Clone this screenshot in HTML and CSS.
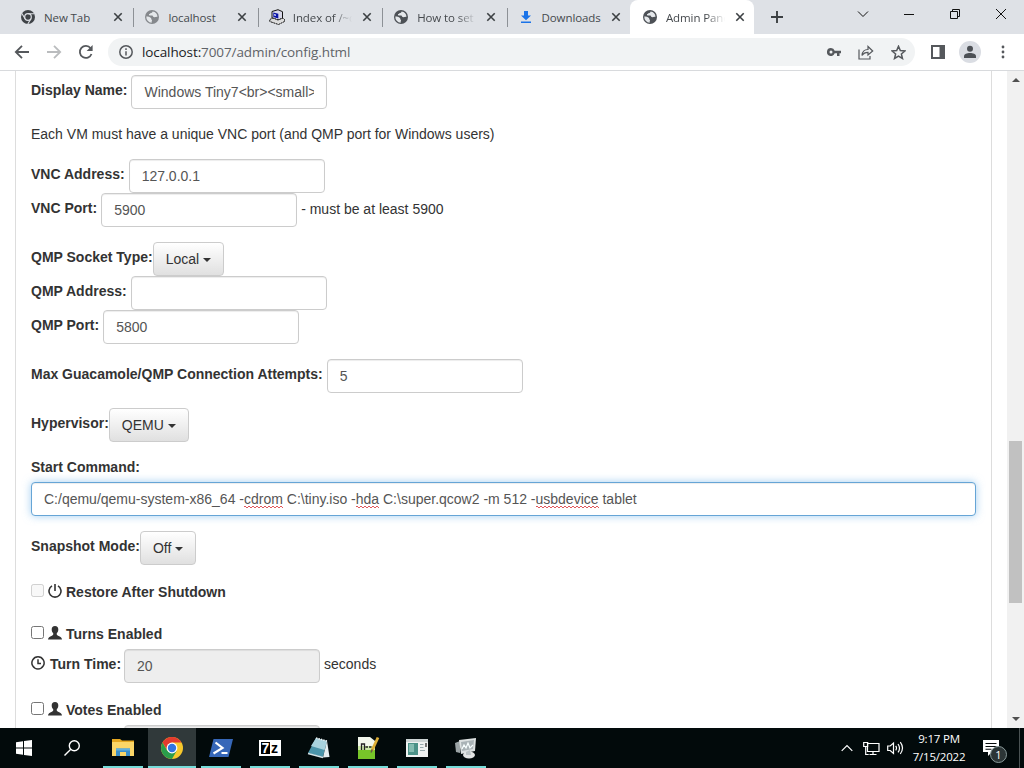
FILE: index.html
```html
<!DOCTYPE html>
<html lang="en">
<head>
    <meta charset="UTF-8">
    <meta name="viewport" content="width=device-width, initial-scale=1.0">
    <title>Admin Panel</title>
    <link rel="stylesheet" href="styles.css">
</head>
<body>
    <!-- shared icons -->
    <svg class="defs" width="0" height="0">
        <symbol id="close" viewBox="0 0 10 10"><path d="M1.3 1.3l7.4 7.4M8.7 1.3L1.3 8.7" stroke="#3c4043" stroke-width="1.6" fill="none"/></symbol>
        <symbol id="globe" viewBox="0 0 14 14">
            <circle cx="7" cy="7" r="7" fill="currentColor"/>
            <path d="M7.6 1.4c-.3 1-.9 1.500-2 1.700-.3.900-.8 1-1.600 1-.1 1 .2 1.500 1.300 1.500h2c.7.200.6 1.300 1.400 1.500 1.200.2 2.200-.5 3.800-.4A5.700 5.700 0 0 0 7.600 1.400zM1.300 6.600c1.700.1 3.600.2 4.600 1.300.8.800 0 1.400.9 1.900.7.600-.3 1.300-.1 2.900A5.700 5.700 0 0 1 1.300 6.600z" fill="#e4e7ea"/>
        </symbol>
        <symbol id="user" viewBox="0 0 14 14"><path d="M7 0C4.700 0 3.700 1.500 3.700 3.500c0 1.700.7 2.800 1.500 3.700.3 1.300-.1 1.900-1.300 2.500C1.500 10.700.2 11.200 0 13.500h14c-.2-2.300-1.500-2.800-3.900-3.800-1.200-.6-1.600-1.200-1.300-2.500.8-.9 1.500-2 1.500-3.700C10.300 1.500 9.300 0 7 0z" fill="#333"/></symbol>
    </svg>

    <div class="tab-strip">
        <div class="tab">
            <svg class="favicon" viewBox="0 0 14 14"><circle cx="7" cy="7" r="7" fill="#3f4347"/><circle cx="7" cy="7" r="3.300" fill="#3f4347" stroke="#dee1e6" stroke-width="1.200"/><path d="M7 3.700h6.400M4.100 8.700L.9 3.500M9.900 8.700L6.800 14" stroke="#dee1e6" stroke-width="1.100"/></svg>
            <span class="tab-title">New Tab</span>
            <svg class="tab-close"><use href="#close"/></svg>
        </div>
        <div class="tab">
            <svg class="favicon light"><use href="#globe"/></svg>
            <span class="tab-title">localhost</span>
            <svg class="tab-close"><use href="#close"/></svg>
        </div>
        <div class="tab">
            <svg class="favicon wide" viewBox="0 0 16 16"><path d="M3 2.500L9 .7l4.500 2v6.800L9 11 3 9z" fill="#d8d8e8" stroke="#111" stroke-width="1"/><path d="M4.300 3.600l5 1.200v4.700l-5-1.500z" fill="#0a14a8"/><path d="M5.200 5l1.600.4V7l-1.600-.4z" fill="#fff"/><path d="M.8 10.500L4 9l5 2 5-2 1.500 1.500v2L9.500 15.500.8 12.500z" fill="#ddd" stroke="#111" stroke-width="1" stroke-dasharray="2 .6"/></svg>
            <span class="tab-title fade">Index of /~c</span>
            <svg class="tab-close"><use href="#close"/></svg>
        </div>
        <div class="tab">
            <svg class="favicon"><use href="#globe"/></svg>
            <span class="tab-title fade">How to set u</span>
            <svg class="tab-close"><use href="#close"/></svg>
        </div>
        <div class="tab">
            <svg class="favicon" viewBox="0 0 14 14"><path d="M5 1h4v4.500h3L7 10.300 2 5.500h3zM2 11.500h10V13H2z" fill="#1a73e8"/></svg>
            <span class="tab-title">Downloads</span>
            <svg class="tab-close"><use href="#close"/></svg>
        </div>
        <div class="tab active">
            <svg class="favicon"><use href="#globe"/></svg>
            <span class="tab-title fade">Admin Panel</span>
            <svg class="tab-close"><use href="#close"/></svg>
        </div>
        <svg class="new-tab" viewBox="0 0 12 12"><path d="M6 0v12M0 6h12" stroke="#3c4043" stroke-width="1.900"/></svg>
        <div class="window-buttons">
            <svg viewBox="0 0 12 12"><path d="M1 3.500l5 5 5-5"/></svg>
            <svg viewBox="0 0 12 12"><path d="M1 6.500h10"/></svg>
            <svg viewBox="0 0 12 12"><path d="M1.500 3.500h7v7h-7zM3.500 3.500v-2h7v7h-2"/></svg>
            <svg viewBox="0 0 12 12"><path d="M1 1l10 10M11 1L1 11"/></svg>
        </div>
    </div>

    <div class="toolbar">
        <svg class="nav" viewBox="0 0 16 16"><path d="M15 8H2M8 1.800L1.800 8 8 14.200"/></svg>
        <svg class="nav disabled" viewBox="0 0 16 16"><path d="M1 8h13M8 1.800L14.200 8 8 14.200"/></svg>
        <svg class="nav" viewBox="0 0 16 16"><path d="M13.500 10A6 6 0 1 1 12.600 4.200"/><path d="M14.600 1v6H8.600z" fill="#55585c" stroke="none"/></svg>
        <div class="address-bar">
            <svg class="info" viewBox="0 0 14 14"><circle cx="7" cy="7" r="6.200"/><path d="M7 6.200v4.300M7 3.300v1.600"/></svg>
            <span class="url"><b>localhost:</b>7007/admin/config.html</span>
            <svg class="key" viewBox="0 0 14 8"><path d="M4 0a4 4 0 1 0 3.700 5.300H10V8h2.500V5.300H14V2.700H7.700A4 4 0 0 0 4 0zm0 2.500a1.500 1.500 0 1 1 0 3 1.500 1.500 0 0 1 0-3z" fill="#55585c" fill-rule="evenodd"/></svg>
            <svg class="share" viewBox="0 0 16 15"><path d="M1 4.500v9.500h11v-3M4 10.500c.3-4 2.500-6 6-6V1.500l4.700 4.500L10 10V7.300C7.500 7.300 5.500 8 4 10.500z"/></svg>
            <svg class="star" viewBox="0 0 14 14"><path d="M7 1.200l1.700 4 4.300.4-3.300 2.800 1 4.200L7 10.300l-3.700 2.300 1-4.200L1 5.600l4.300-.4z"/></svg>
        </div>
        <svg class="panel" viewBox="0 0 14 14"><path d="M1 1h12v12H1zM9.500 1v12M11.500 1v12" fill="none" stroke="#55585c" stroke-width="2"/></svg>
        <span class="avatar"><svg viewBox="0 0 14 14"><circle cx="7" cy="3.800" r="3" fill="#4d5156"/><path d="M1 13v-1.800c0-2.300 3-3.200 6-3.200s6 .9 6 3.200V13z" fill="#4d5156"/></svg></span>
        <svg class="menu" viewBox="0 0 4 14"><circle cx="2" cy="2" r="1.400"/><circle cx="2" cy="7" r="1.400"/><circle cx="2" cy="12" r="1.400"/></svg>
    </div>

    <div class="page">
        <div class="card">
            <div class="row">
                <label>Display Name:</label>
                <input class="form-control" type="text" value="Windows Tiny7&lt;br&gt;&lt;small&gt;">
            </div>
            <p class="hint">Each VM must have a unique VNC port (and QMP port for Windows users)</p>
            <div class="row">
                <label>VNC Address:</label>
                <input class="form-control" type="text" value="127.0.0.1">
            </div>
            <div class="row last">
                <label>VNC Port:</label>
                <input class="form-control" type="text" value="5900">
                <span class="after">- must be at least 5900</span>
            </div>
            <div class="row tight">
                <label>QMP Socket Type:</label>
                <button class="btn">Local <span class="caret"></span></button>
            </div>
            <div class="row">
                <label>QMP Address:</label>
                <input class="form-control" type="text" value="">
            </div>
            <div class="row last">
                <label>QMP Port:</label>
                <input class="form-control" type="text" value="5800">
            </div>
            <div class="row last">
                <label>Max Guacamole/QMP Connection Attempts:</label>
                <input class="form-control" type="text" value="5">
            </div>
            <div class="row tight last">
                <label>Hypervisor:</label>
                <button class="btn">QEMU <span class="caret"></span></button>
            </div>
            <label class="block-label">Start Command:</label>
            <div class="form-control command focused">C:/qemu/qemu-system-x86_64 -<u>cdrom</u> C:\tiny.iso -<u>hda</u> C:\super.qcow2 -m 512 -<u>usbdevice</u> tablet</div>
            <div class="row tight last">
                <label>Snapshot Mode:</label>
                <button class="btn">Off <span class="caret"></span></button>
            </div>
            <div class="check restore">
                <input type="checkbox" disabled>
                <svg class="glyph" viewBox="0 0 14 14"><path d="M4 1.900a6 6 0 1 0 6 0M7 0v7" fill="none" stroke="#333" stroke-width="1.600"/></svg>
                <label>Restore After Shutdown</label>
            </div>
            <div class="check">
                <input type="checkbox">
                <svg class="glyph"><use href="#user"/></svg>
                <label>Turns Enabled</label>
            </div>
            <div class="row last">
                <svg class="glyph clock" viewBox="0 0 14 14"><path d="M7 .8a6.100 6.100 0 1 0 .01 0zM7 3.200V7.600H10" fill="none" stroke="#333" stroke-width="1.500"/></svg>
                <label class="turn-label">Turn Time:</label>
                <input class="form-control" type="text" value="20" disabled>
                <span class="after seconds">seconds</span>
            </div>
            <div class="check">
                <input type="checkbox">
                <svg class="glyph"><use href="#user"/></svg>
                <label>Votes Enabled</label>
            </div>
            <div class="row vote-time">
                <input class="form-control" type="text" value="" disabled>
            </div>
        </div>
        <div class="scrollbar">
            <span class="arrow up"></span>
            <span class="thumb"></span>
            <span class="arrow down"></span>
        </div>
    </div>

    <div class="taskbar">
        <div class="task start"><svg width="16" height="16" viewBox="0 0 16 16"><path d="M0 2.200l7-1v6.300H0zM8 1l8-1v7.500H8zM0 8.500h7v6.300l-7-1zM8 8.500h8V16l-8-1z" fill="#fff"/></svg></div>
        <div class="task search"><svg width="16" height="16" viewBox="0 0 16 16"><circle cx="10.300" cy="5.700" r="5" fill="none" stroke="#fff" stroke-width="1.400"/><path d="M6.800 9.200L.5 15.500" stroke="#fff" stroke-width="1.400"/></svg></div>
        <div class="task open"><svg width="22" height="20" viewBox="0 0 22 20"><path d="M0 1h8l2 1.500h12V18H0z" fill="#e5a821"/><path d="M0 4h22v14H0z" fill="#fbd667"/><path d="M4 10.500h14V18h-4v-4H8v4H4z" fill="#3b8fc9"/><path d="M4 10.500h14v2H4z" fill="#62b1de"/></svg></div>
        <div class="task open current"><svg width="22" height="22" viewBox="0 0 22 22"><circle cx="11" cy="11" r="11" fill="#f7c82c"/><path d="M1.500 5.500a11 11 0 0 1 19 0H11L6.500 13.500z" fill="#e33b2e"/><path d="M1.500 5.500A11 11 0 0 0 11 22l4.700-8.200H6.300z" fill="#2a9d4b"/><circle cx="11" cy="11" r="5.400" fill="#fff"/><circle cx="11" cy="11" r="4.200" fill="#3274e0"/></svg></div>
        <div class="task open"><svg width="24" height="18" viewBox="0 0 24 18"><path d="M4.500 0H24l-4.500 18H0z" fill="#3667b8"/><path d="M6.500 3.500l7 5.500-9 5.500M12.500 14h6" fill="none" stroke="#fff" stroke-width="2.200"/></svg></div>
        <div class="task open"><span class="seven-zip"><b>7</b><i>z</i></span></div>
        <div class="task open"><svg width="24" height="22" viewBox="0 0 24 22"><path d="M9 1l11 3-4 16-15-4z" fill="#4c95aa"/><path d="M9 1l11 3-2.500 9L4 9z" fill="#a9d3de"/><path d="M20 4l2.500 16-6.500.5z" fill="#e6eef0"/><path d="M1 16.500l15 4" stroke="#d5e4e8" stroke-width="1.500"/><path d="M9 1l11 3" stroke="#f3f3f3" stroke-width="1.500" stroke-dasharray="1.500 1"/></svg></div>
        <div class="task open"><svg width="24" height="24" viewBox="0 0 24 24"><path d="M2 1h12l5 4v18H2z" fill="#f2f7ec"/><path d="M2 13h17v10H2z" fill="#77c529"/><path d="M2 10h17v4H2z" fill="#cbe9a6"/><path d="M5.500 14V8h3v6M9.500 11h2.500M13 11h2.500" fill="none" stroke="#222" stroke-width="1.300"/><path d="M22 1.500l-6 13" stroke="#ddae35" stroke-width="2.800"/><path d="M16.300 13.500l-1.300 3" stroke="#654" stroke-width="1.500"/></svg></div>
        <div class="task open"><svg width="22" height="18" viewBox="0 0 22 18"><path d="M0 0h22v18H0z" fill="#f0f3f2"/><path d="M0 0h22v3H0z" fill="#cdd5d5"/><path d="M2 4h10v12H2z" fill="#4c9288"/><path d="M3 5h5v8H3z" fill="#84bcb1"/><path d="M14 5.500h3.500M14 8.500h3.500M14 11.500h5" stroke="#9aacaf"/><path d="M20 4v4" stroke="#333" stroke-width="1.300"/></svg></div>
        <div class="task open"><svg width="24" height="22" viewBox="0 0 24 22"><path d="M1 6l5-2v12l-4-1z" fill="#9ba4a6"/><path d="M5 3l17-2-1 13-14 3z" fill="#dce1e1"/><path d="M7 5l13-2-1 9-11 2z" fill="#a9b3b6"/><path d="M8 12l2-4 2 3 2-5 2 5 3-3" fill="none" stroke="#f8ffff" stroke-width="1.200"/><ellipse cx="15" cy="18" rx="6" ry="3.500" fill="#e4e6e6"/><path d="M12 15l4-2 1 5h-5z" fill="#bcc4c6"/></svg></div>
        <div class="tray">
            <svg class="chevron" viewBox="0 0 12 8"><path d="M.7 6.800L6 1.500l5.300 5.300"/></svg>
            <svg class="network" viewBox="0 0 17 15"><path d="M4.500 2.500H16v8H4.500zM10 10.500v3M6.500 13.500h7M.7 1.500h4v4h-4zM2.700 5.500v8h3"/></svg>
            <svg class="sound" viewBox="0 0 17 14"><path d="M.7 5h2.500L6.500 2v10.500L3.200 9.500H.7zM8.700 4.800q1.600 2.300 0 4.600M11 3q3 4.200 0 8.400M13.300 1.200q4.400 5.900 0 11.800"/></svg>
            <div class="clock-text"><span>9:17 PM</span><span>7/15/2022</span></div>
            <div class="notify">
                <svg width="16" height="16" viewBox="0 0 16 16"><path d="M0 0h16v12H9l-4 4v-4H0z" fill="#fff"/><path d="M2.500 3.500h11M2.500 6.500h11M2.500 9.300h6" stroke="#070b0c" stroke-width="1.100"/></svg>
                <span class="badge">1</span>
            </div>
            <span class="show-desktop"></span>
        </div>
    </div>
</body>
</html>
```
FILE: styles.css
```css
* {
    box-sizing: border-box;
}
body {
    margin: 0;
    width: 1024px;
    height: 768px;
    overflow: hidden;
    display: flex;
    flex-direction: column;
    background: #fff;
    font-family: "Liberation Sans", Arial, sans-serif;
    font-size: 14px;
    color: #333;
}
svg {
    flex: none;
}
.defs {
    position: absolute;
}

/* tabs */
.tab-strip {
    height: 34px;
    flex: none;
    display: flex;
    align-items: center;
    padding-left: 8px;
    background: #dee1e6;
    font-family: "Open Sans", "Noto Sans", sans-serif;
    font-size: 11.5px;
}
.tab {
    width: 124.4px;
    height: 34px;
    flex: none;
    display: flex;
    align-items: center;
    padding-left: 13px;
}
.tab + .tab {
    background: linear-gradient(#8d9196, #8d9196) left 1px top 8px / 1px 19px no-repeat;
}
.tab + .tab.active {
    background: #fff;
    border-radius: 8px 8px 0 0;
}
.favicon {
    width: 14px;
    height: 14px;
    color: #4d5156;
}
.favicon.light {
    color: #85888c;
}
.favicon.wide {
    width: 16px;
    height: 16px;
    margin: 0 -1px;
}
.tab-title {
    width: 59px;
    margin-left: 9px;
    overflow: hidden;
    white-space: nowrap;
    letter-spacing: -.1px;
    color: #45494d;
}
.tab-title.fade {
    -webkit-mask-image: linear-gradient(90deg, #000 68%, transparent 100%);
    mask-image: linear-gradient(90deg, #000 68%, transparent 100%);
}
.tab-close {
    width: 10px;
    height: 10px;
    margin-left: 10px;
}
.new-tab {
    width: 12px;
    height: 12px;
    margin-left: 17px;
}
.window-buttons {
    display: flex;
    gap: 34px;
    margin-left: auto;
    padding: 0 17px 6px 0;
}
.window-buttons svg {
    width: 12px;
    height: 12px;
    fill: none;
    stroke: #111;
    stroke-width: 1;
}

/* toolbar */
.toolbar {
    height: 37px;
    flex: none;
    display: flex;
    align-items: center;
    padding-left: 14px;
    border-bottom: 1px solid #d8dadd;
}
.nav {
    width: 16px;
    height: 16px;
    margin-right: 16px;
    fill: none;
    stroke: #55585c;
    stroke-width: 1.8;
}
.nav.disabled {
    stroke: #babcbe;
}
.address-bar {
    width: 807px;
    height: 28px;
    display: flex;
    align-items: center;
    margin-left: -2px;
    padding: 0 9px 0 11px;
    border-radius: 14px;
    background: #f1f3f4;
}
.info {
    width: 14px;
    height: 14px;
    fill: none;
    stroke: #55585c;
    stroke-width: 1.5;
}
.url {
    flex: 1;
    margin-left: 9px;
    font: 13.5px "Open Sans", "Noto Sans", sans-serif;
    letter-spacing: -.1px;
    color: #5f6368;
}
.url b {
    font-weight: normal;
    color: #202124;
}
.key {
    width: 14px;
    height: 8px;
    margin-right: 17px;
}
.share {
    width: 16px;
    height: 15px;
    margin-right: 17px;
    fill: none;
    stroke: #55585c;
    stroke-width: 1.2;
}
.star {
    width: 15px;
    height: 15px;
    fill: none;
    stroke: #55585c;
    stroke-width: 1.4;
}
.panel {
    width: 14px;
    height: 14px;
    margin-left: 16px;
}
.avatar {
    width: 22px;
    height: 22px;
    display: flex;
    align-items: center;
    justify-content: center;
    margin: 0 19.5px 0 14px;
    border-radius: 50%;
    background: #dadde3;
}
.avatar svg {
    width: 14px;
    height: 14px;
}
.menu {
    width: 4px;
    height: 14px;
    fill: #55585c;
}

/* page */
.page {
    height: 657px;
    flex: none;
    display: flex;
    overflow: hidden;
}
.card {
    width: 977px;
    height: 700px;
    flex: none;
    margin-left: 15px;
    padding: 4px 15px 0;
    border: 1px solid #ddd;
    border-width: 0 1px;
}
.row {
    height: 34px;
    display: flex;
    gap: 4px;
}
.row.tight {
    gap: 0;
}
.row.last {
    margin-bottom: 15px;
}
label {
    font-weight: bold;
    line-height: 30px;
    white-space: nowrap;
}
.after {
    line-height: 32px;
}
.after.seconds {
    line-height: 30px;
}
.hint {
    height: 20px;
    margin: 15px 0;
    line-height: 20px;
}
.form-control {
    width: 196px;
    height: 34px;
    padding: 6px 12px;
    border: 1px solid #ccc;
    border-radius: 4px;
    background: #fff;
    box-shadow: inset 0 1px 1px rgba(0, 0, 0, .075);
    font: 14px/20px "Liberation Sans", Arial, sans-serif;
    color: #555;
}
.form-control:disabled {
    background: #eee;
}
.command {
    width: 945px;
    white-space: nowrap;
}
.focused {
    margin-bottom: 15px;
    border-color: #66a5d6;
    box-shadow: inset 0 1px 1px rgba(0, 0, 0, .075), 0 0 8px rgba(102, 175, 233, .6);
}
/* misspelled words */
.command u {
    padding-bottom: 1px;
    text-decoration: none;
    background: radial-gradient(circle at 1px 0, transparent .6px, #e0585c .7px, #e0585c 1.4px, transparent 1.5px) left bottom / 4px 2px repeat-x,
        radial-gradient(circle at 3px 2px, transparent .6px, #e0585c .7px, #e0585c 1.4px, transparent 1.5px) left bottom / 4px 2px repeat-x;
}
.btn {
    height: 34px;
    padding: 6px 12px;
    border: 1px solid #ccc;
    border-radius: 4px;
    background: linear-gradient(#fff, #e0e0e0);
    font: 14px/20px "Liberation Sans", Arial, sans-serif;
    color: #333;
}
.caret {
    display: inline-block;
    vertical-align: middle;
    border-top: 4px solid #333;
    border-left: 4px solid transparent;
    border-right: 4px solid transparent;
}
.block-label {
    display: block;
    height: 25px;
    line-height: 20px;
}
.check {
    height: 27px;
    display: flex;
    align-items: flex-start;
}
.check.restore {
    height: 42px;
}
.check input {
    width: 13px;
    height: 13px;
    margin: 4px 4px 0 0;
}
.check label {
    margin-left: 4px;
    line-height: 24px;
}
.glyph {
    width: 14px;
    height: 14px;
    margin-top: 4px;
}
.glyph.clock {
    margin-top: 7px;
}
.turn-label {
    margin: 0 -1px 0 1px;
}
.vote-time {
    padding-left: 93px;
}

/* scrollbar */
.scrollbar {
    width: 17px;
    height: 657px;
    display: flex;
    flex-direction: column;
    align-items: center;
    margin-left: auto;
    padding: 7px 0;
    background: #f1f1f1;
}
.arrow {
    border-left: 4px solid transparent;
    border-right: 4px solid transparent;
}
.up {
    border-bottom: 4px solid #505050;
}
.down {
    margin-top: auto;
    border-top: 4px solid #505050;
}
.thumb {
    width: 13px;
    height: 162px;
    margin-top: 359px;
    background: #c1c1c1;
}

/* taskbar */
.taskbar {
    height: 40px;
    flex: none;
    display: flex;
    background: #020a0b;
}
.task {
    width: 40px;
    height: 40px;
    display: flex;
    align-items: center;
    justify-content: center;
    margin-right: 9px;
}
.task.start {
    width: 48px;
    margin: 0;
}
.task.search {
    width: 48px;
    margin-right: 7px;
}
.task.open {
    border-bottom: 2px solid #76dcd9;
    padding-top: 2px;
}
.task.current {
    width: 48px;
    margin: 0 5px 0 -4px;
    background: #30393a;
}
.seven-zip {
    width: 22px;
    height: 16px;
    display: flex;
    padding: 2px;
    background: #fff;
    color: #000;
    font-size: 14px;
    font-weight: bold;
    line-height: 12px;
}
.seven-zip b {
    width: 9px;
    text-align: center;
    background: #000;
    color: #fff;
}
.seven-zip i {
    width: 9px;
    text-align: center;
    font-style: normal;
}
.tray {
    display: flex;
    align-items: center;
    margin-left: auto;
    color: #fff;
    font-family: "Open Sans", "Noto Sans", sans-serif;
}
.tray > svg {
    fill: none;
    stroke: #fff;
    stroke-width: 1.2;
}
.chevron {
    width: 12px;
    height: 8px;
    margin-right: 10px;
}
.network {
    width: 17px;
    height: 15px;
    margin-right: 7px;
}
.sound {
    width: 17px;
    height: 14px;
}
.clock-text {
    width: 70px;
    display: flex;
    flex-direction: column;
    margin-right: 2px;
    font-size: 11.5px;
    letter-spacing: -.2px;
    line-height: 18px;
    text-align: center;
}
.notify {
    position: relative;
    width: 16px;
    height: 16px;
    margin: 0 20px 0 7px;
}
.badge {
    position: absolute;
    left: 7px;
    top: 6px;
    width: 17px;
    height: 17px;
    border: 1px solid #899;
    border-radius: 50%;
    background: #2c3536;
    font-size: 11px;
    line-height: 15px;
    text-align: center;
}
.show-desktop {
    width: 5px;
    height: 40px;
    border-left: 1px solid #4a5253;
}
```
